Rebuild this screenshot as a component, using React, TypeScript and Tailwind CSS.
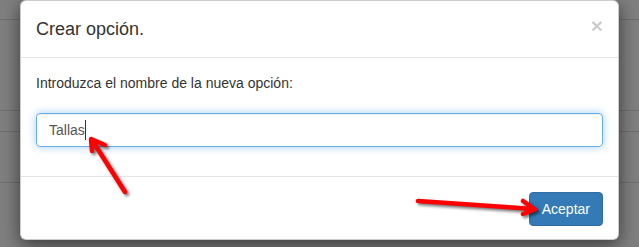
const App = () => {
  return (
    <div className="relative w-[639px] h-[247px] overflow-hidden bg-[#7f7f7f] font-['Liberation_Sans',Arial,sans-serif]">
      {/* page behind the backdrop */}
      <div className="flex flex-col">
        <div className="h-[20px] border-b border-[#6f6f6f]" />
        <div className="h-[91px] border-b border-[#6f6f6f]" />
        <div className="h-[21px] border-b border-[#6f6f6f]" />
        <div className="h-[51px] border-b border-[#6f6f6f]" />
      </div>

      {/* Modal */}
      <div className="absolute left-[20px] top-0 w-[599px] bg-white border border-black/20 rounded-[6px] shadow-[0_5px_18px_rgba(0,0,0,0.55)] text-[#333]">
        {/* Header */}
        <div className="flex items-start justify-between p-[15px] border-b border-[#e5e5e5]">
          <h4 className="text-[18px] leading-[26px] font-normal">Crear opción.</h4>
          <button className="mt-[-1px] mr-0 text-[21px] leading-[21px] font-bold text-black opacity-20">
            ×
          </button>
        </div>

        {/* Body */}
        <div className="px-[15px] pt-[15px] pb-[29px]">
          <p className="text-[14px] leading-[20px] mb-[20px]">
            Introduzca el nombre de la nueva opción:
          </p>
          <div className="h-[34px] flex items-center px-[12px] border border-[#66afe9] rounded-[4px] shadow-[inset_0_1px_1px_rgba(0,0,0,0.075),0_0_8px_rgba(102,175,233,0.6)] text-[14px] text-[#555]">
            <span>Tallas</span>
            <span className="w-px h-[20px] bg-[#333]" />
          </div>
        </div>

        {/* Footer */}
        <div className="flex justify-end px-[15px] pt-[15px] pb-[13px] border-t border-[#e5e5e5]">
          <button className="h-[34px] px-[12px] text-[14px] text-white bg-[#337ab7] border border-[#2e6da4] rounded-[4px]">
            Aceptar
          </button>
        </div>
      </div>

      {/* Arrows */}
      <svg
        className="absolute inset-0 pointer-events-none drop-shadow-[2px_2px_1.5px_rgba(0,0,0,0.55)]"
        width="639"
        height="247"
        viewBox="0 0 639 247"
        fill="none"
        stroke="#ff0000"
        strokeWidth="4.5"
        strokeLinecap="round"
        strokeLinejoin="round"
      >
        <path d="M125 192 L92 140" />
        <path d="M92 151 L91 139 L105 145" />
        <path d="M418 201 L533 209" />
        <path d="M523 201 L535 209.5 L523 214" />
      </svg>
    </div>
  );
};

export default App;
